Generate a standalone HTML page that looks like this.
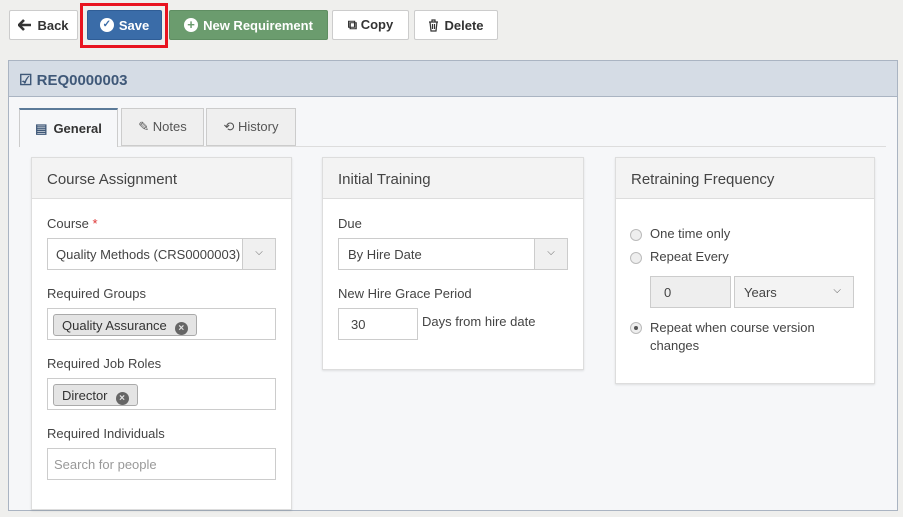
<!DOCTYPE html>
<html><head><style>
*{box-sizing:border-box;margin:0;padding:0}
body{width:903px;height:517px;background:#efefed;font-family:"Liberation Sans",sans-serif;font-size:13px;color:#333;position:relative;overflow:hidden}
.a{position:absolute}
.btn{position:absolute;top:10px;height:30px;border:1px solid #ccc;border-radius:2px;background:#fff;font-weight:bold;font-size:13px;display:flex;align-items:center;justify-content:center;gap:5px;color:#333;white-space:nowrap}
.card{position:absolute;background:#fff;border:1px solid #ddd;box-shadow:0 1px 2px rgba(0,0,0,.1)}
.ch{height:41px;background:#f3f3f3;border-bottom:1px solid #ddd;font-size:15px;color:#444;padding:13px 0 0 15px}
.lbl{position:absolute;font-size:13px;color:#444}
.inp{position:absolute;height:32px;border:1px solid #ccc;background:#fff;font-size:13px;color:#444;padding:8px 0 0 8px}
.dd{position:absolute;right:0;top:0;width:33px;height:30px;background:#f0f0f0;border-left:1px solid #ccc;text-align:center;font-size:10px;color:#666;padding-top:8px}
.tag{position:absolute;top:5px;left:5px;height:22px;border:1px solid #aaa;border-radius:3px;background:#e4e4e4;font-size:13px;color:#333;padding:3px 8px}
.x{display:inline-block;width:13px;height:13px;border-radius:50%;background:#666;color:#e4e4e4;font-size:10px;line-height:13px;text-align:center;font-weight:bold;margin-left:8px;vertical-align:-1px}
.tab{position:absolute;top:108px;height:38px;border:1px solid #ccc;background:#efefef;font-size:13px;color:#555;display:flex;align-items:center;justify-content:center;gap:6px}
.rad{position:absolute;width:12px;height:12px;border-radius:50%;border:1px solid #bbb;background:#eee}
</style></head><body>
<div class="btn" style="left:9px;width:69px"><svg width="14" height="12" viewBox="0 0 14 12"><path d="M6 1L1 6l5 5M1 6h12" stroke="#333" stroke-width="2.6" fill="none"/></svg>Back</div>
<div class="a" style="left:80px;top:3px;width:88px;height:45px;border:3px solid #e8131f"></div>
<div class="btn" style="left:87px;width:75px;background:#3a6ca8;border-color:#2f5d96;color:#fff"><span style="display:inline-block;width:14px;height:14px;border-radius:50%;background:#fff;color:#3a6ca8;font-size:10px;line-height:14px;text-align:center">✓</span>Save</div>
<div class="btn" style="left:169px;width:159px;background:#6b9c6e;border-color:#5f8e62;color:#fff"><span style="display:inline-block;width:14px;height:14px;border-radius:50%;background:#fff;color:#6b9c6e;font-size:13px;line-height:14px;text-align:center">+</span>New Requirement</div>
<div class="btn" style="left:332px;width:77px">⧉ Copy</div>
<div class="btn" style="left:414px;width:84px"><svg width="11" height="13" viewBox="0 0 11 13"><path d="M1 3h9M4 3V1h3v2M2 3l1 9h5l1-9M4.5 5v5M6.5 5v5" stroke="#333" stroke-width="1.2" fill="none"/></svg>Delete</div>

<div class="a" style="left:8px;top:60px;width:890px;height:451px;background:#f6f7f9;border:1px solid #aab4c2"></div>
<div class="a" style="left:9px;top:61px;width:888px;height:36px;background:#d5dce5;border-bottom:1px solid #aab4c2;font-weight:bold;font-size:15px;color:#3f5878;padding:10px 0 0 10px">☑ REQ0000003</div>

<div class="a" style="left:19px;top:146px;width:867px;height:1px;background:#ddd"></div>
<div class="tab" style="left:19px;width:99px;background:#f6f7f9;border-top:2px solid #5b7a99;border-bottom:none;height:39px;font-weight:bold;color:#333"><span style="color:#3f5878">▤</span>General</div>
<div class="tab" style="left:121px;width:83px">✎ Notes</div>
<div class="tab" style="left:206px;width:90px">⟲ History</div>

<div class="card" style="left:31px;top:157px;width:261px;height:353px">
<div class="ch">Course Assignment</div>
<div class="lbl" style="left:15px;top:58px">Course <span style="color:#d33">*</span></div>
<div class="inp" style="left:15px;top:80px;width:229px;overflow:hidden;white-space:nowrap">Quality Methods (CRS0000003)<div class="dd">⌵</div></div>
<div class="lbl" style="left:15px;top:128px">Required Groups</div>
<div class="inp" style="left:15px;top:150px;width:229px"><div class="tag">Quality Assurance<span class="x">×</span></div></div>
<div class="lbl" style="left:15px;top:198px">Required Job Roles</div>
<div class="inp" style="left:15px;top:220px;width:229px"><div class="tag">Director<span class="x">×</span></div></div>
<div class="lbl" style="left:15px;top:268px">Required Individuals</div>
<div class="inp" style="left:15px;top:290px;width:229px;color:#999;padding-left:6px">Search for people</div>
</div>

<div class="card" style="left:322px;top:157px;width:262px;height:213px">
<div class="ch">Initial Training</div>
<div class="lbl" style="left:15px;top:58px">Due</div>
<div class="inp" style="left:15px;top:80px;width:230px;padding-left:9px">By Hire Date<div class="dd">⌵</div></div>
<div class="lbl" style="left:15px;top:128px">New Hire Grace Period</div>
<div class="inp" style="left:15px;top:150px;width:80px;padding-left:12px">30</div>
<div class="lbl" style="left:99px;top:156px">Days from hire date</div>
</div>

<div class="card" style="left:615px;top:157px;width:260px;height:227px">
<div class="ch">Retraining Frequency</div>
<div class="rad" style="left:14px;top:71px"></div><div class="lbl" style="left:34px;top:68px">One time only</div>
<div class="rad" style="left:14px;top:94px"></div><div class="lbl" style="left:34px;top:91px">Repeat Every</div>
<div class="inp" style="left:34px;top:118px;width:81px;background:#eee;padding-left:13px">0</div>
<div class="inp" style="left:118px;top:118px;width:120px;background:#f3f3f3;padding-left:9px">Years<span style="position:absolute;right:12px;top:8px;font-size:10px;color:#555">⌵</span></div>
<div class="rad" style="left:14px;top:164px"><div style="width:4px;height:4px;border-radius:50%;background:#555;margin:3px"></div></div>
<div class="lbl" style="left:34px;top:161px;line-height:18px;width:200px">Repeat when course version changes</div>
</div>
</body></html>
